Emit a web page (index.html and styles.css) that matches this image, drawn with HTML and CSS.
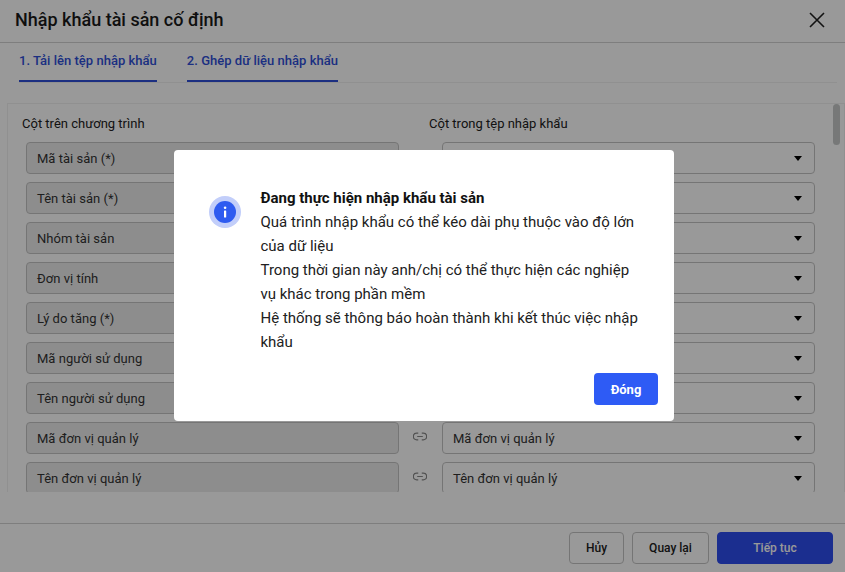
FILE: index.html
```html
<!DOCTYPE html>
<html lang="vi">
<head>
<meta charset="utf-8">
<title>Nhập khẩu tài sản cố định</title>
<link rel="stylesheet" href="styles.css">
</head>
<body>
<div class="page">
  <header class="head">
    <h1 class="title">Nhập khẩu tài sản cố định</h1>
    <svg class="close" width="16" height="16" viewBox="0 0 16 16"><path d="M1 1l14 14M15 1L1 15" stroke="#212121" stroke-width="1.6" fill="none"/></svg>
  </header>
  <nav class="tabs">
    <span class="tab">1. Tải lên tệp nhập khẩu</span>
    <span class="tab">2. Ghép dữ liệu nhập khẩu</span>
  </nav>
  <section class="panel">
    <div class="grid">
      <div class="label">Cột trên chương trình</div><div></div><div class="label">Cột trong tệp nhập khẩu</div>

      <div class="field">Mã tài sản (*)</div>
      <div class="link"></div>
      <div class="select end"><i class="caret"></i></div>

      <div class="field">Tên tài sản (*)</div>
      <div class="link"></div>
      <div class="select end"><i class="caret"></i></div>

      <div class="field">Nhóm tài sản</div>
      <div class="link"></div>
      <div class="select end"><i class="caret"></i></div>

      <div class="field">Đơn vị tính</div>
      <div class="link"></div>
      <div class="select end"><i class="caret"></i></div>

      <div class="field">Lý do tăng (*)</div>
      <div class="link"></div>
      <div class="select end"><i class="caret"></i></div>

      <div class="field">Mã người sử dụng</div>
      <div class="link"></div>
      <div class="select end"><i class="caret"></i></div>

      <div class="field">Tên người sử dụng</div>
      <div class="link"></div>
      <div class="select end"><i class="caret"></i></div>

      <div class="field">Mã đơn vị quản lý</div>
      <div class="link"><svg width="14" height="9" viewBox="0 0 16 10"><path d="M6 1.2H4.2a3.8 3.8 0 0 0 0 7.6H6M10 1.2h1.8a3.8 3.8 0 0 1 0 7.6H10M4.8 5h6.4" stroke="#888" stroke-width="1.4" fill="none"/></svg></div>
      <div class="select">Mã đơn vị quản lý<i class="caret"></i></div>

      <div class="field">Tên đơn vị quản lý</div>
      <div class="link"><svg width="14" height="9" viewBox="0 0 16 10"><path d="M6 1.2H4.2a3.8 3.8 0 0 0 0 7.6H6M10 1.2h1.8a3.8 3.8 0 0 1 0 7.6H10M4.8 5h6.4" stroke="#888" stroke-width="1.4" fill="none"/></svg></div>
      <div class="select">Tên đơn vị quản lý<i class="caret"></i></div>
    </div>
    <div class="thumb"></div>
  </section>
  <footer class="foot">
    <button class="btn">Hủy</button>
    <button class="btn back">Quay lại</button>
    <button class="btn next">Tiếp tục</button>
  </footer>
</div>
<div class="overlay"></div>
<div class="dialog">
  <div class="body">
    <span class="ring"><svg width="22" height="22" viewBox="0 0 22 22"><circle cx="11" cy="11" r="11" fill="#2e5bf0"/><rect x="10" y="9.5" width="2.2" height="7" rx=".6" fill="#fff"/><circle cx="11.1" cy="6.8" r="1.3" fill="#fff"/></svg></span>
    <div class="msg">
      <strong class="msg-title">Đang thực hiện nhập khẩu tài sản</strong>
      <p class="line">Quá trình nhập khẩu có thể kéo dài phụ thuộc vào độ lớn của dữ liệu</p>
      <p class="line">Trong thời gian này anh/chị có thể thực hiện các nghiệp vụ khác trong phần mềm</p>
      <p class="line">Hệ thống sẽ thông báo hoàn thành khi kết thúc việc nhập khẩu</p>
    </div>
  </div>
  <div class="actions"><button class="ok">Đóng</button></div>
</div>
</body>
</html>
```
FILE: styles.css
```css
* { box-sizing: border-box; }
html, body { margin: 0; height: 100%; overflow: hidden; }
body { font-family: Roboto, "Noto Sans", sans-serif; font-size: 14px; color: #212121; background: #fff; }
.page { height: 572px; display: flex; flex-direction: column; }
.head { height: 43px; flex: none; display: flex; align-items: center; justify-content: space-between; padding: 0 20px 2px 15px; border-bottom: 1px solid #d3d3d3; }
.title { margin: 0; font-size: 18px; font-weight: 500; line-height: 24px; color: #1a1a1a; }
.close { flex: none; }
.tabs { height: 40px; flex: none; margin: 0 8px 0 19px; display: flex; gap: 30px; align-items: stretch; border-bottom: 1px solid #f1f1f1; }
.tab { font-size: 13px; font-weight: 500; color: #2f4fd8; line-height: 17px; padding-top: 9px; border-bottom: 2px solid #2f4fd8; height: 39px; letter-spacing: .02px; }
.panel { position: relative; height: 389px; flex: none; margin: 20px 0 0 7px; padding: 10px 4px 0 18px; border: 1px solid #f1f1f1; border-bottom: 0; overflow: hidden; background: #fff; }
.grid { display: grid; grid-template-columns: 373px 43px 373px; grid-template-rows: 20px; grid-auto-rows: 32px; row-gap: 8px; width: 806px; }
.label { line-height: 19px; font-size: 13px; color: #212121; margin-left: -4px; }
.label:nth-child(3) { margin-left: -13px; }
.field, .select { height: 32px; border: 1px solid #c4c4c4; border-radius: 4px; padding: 0 10px; font-size: 13px; color: #333; display: flex; align-items: center; justify-content: space-between; letter-spacing: .02px; }
.field { background: #ececec; }
.select { background: #fff; }
.end { justify-content: flex-end; }
.caret { width: 0; height: 0; border: 4px solid transparent; border-top: 5px solid #000; border-bottom: 0; margin-right: 2px; }
.link { display: flex; justify-content: center; padding: 10px 2px 0 0; }
.link svg { display: block; }
.thumb { position: absolute; right: 4px; top: 0; width: 7px; height: 41px; border-radius: 4px; background: #c6c9c9; }
.foot { margin-top: 31px; flex: 1; border-top: 1px solid #d3d3d3; display: flex; justify-content: flex-end; align-items: flex-start; gap: 8px; padding: 8px 12px 0 0; }
.btn { height: 32px; border: 1px solid #c4c4c4; border-radius: 4px; background: #fff; font: 500 12px Roboto, sans-serif; color: #212121; width: 55px; padding: 0; }
.back { width: 77px; }
.next { width: 116px; background: #2d4dee; border-color: #2d4dee; color: #fff; }
.overlay { position: absolute; inset: 0; background: rgba(0,0,0,.4); }
.dialog { position: absolute; left: 174px; top: 150px; width: 500px; height: 271px; background: #fff; border-radius: 4px; display: flex; flex-direction: column; padding: 36px 16px 16px 35px; }
.body { display: flex; flex: 1; gap: 19.5px; min-height: 0; }
.ring { flex: none; width: 32px; height: 32px; margin-top: 10px; border-radius: 50%; background: #c2cefa; display: flex; align-items: center; justify-content: center; }
.ring svg { display: block; width: 22px; height: 22px; }
.msg { width: 380px; font-size: 15px; line-height: 24px; color: #212121; }
.msg-title { display: block; font-weight: 700; color: #111; }
.line { margin: 0; }
.actions { display: flex; justify-content: flex-end; }
.ok { width: 64px; height: 32px; border: 0; border-radius: 4px; background: #2e5bf5; color: #fff; font: 700 13px Roboto, sans-serif; padding: 0; }
```
